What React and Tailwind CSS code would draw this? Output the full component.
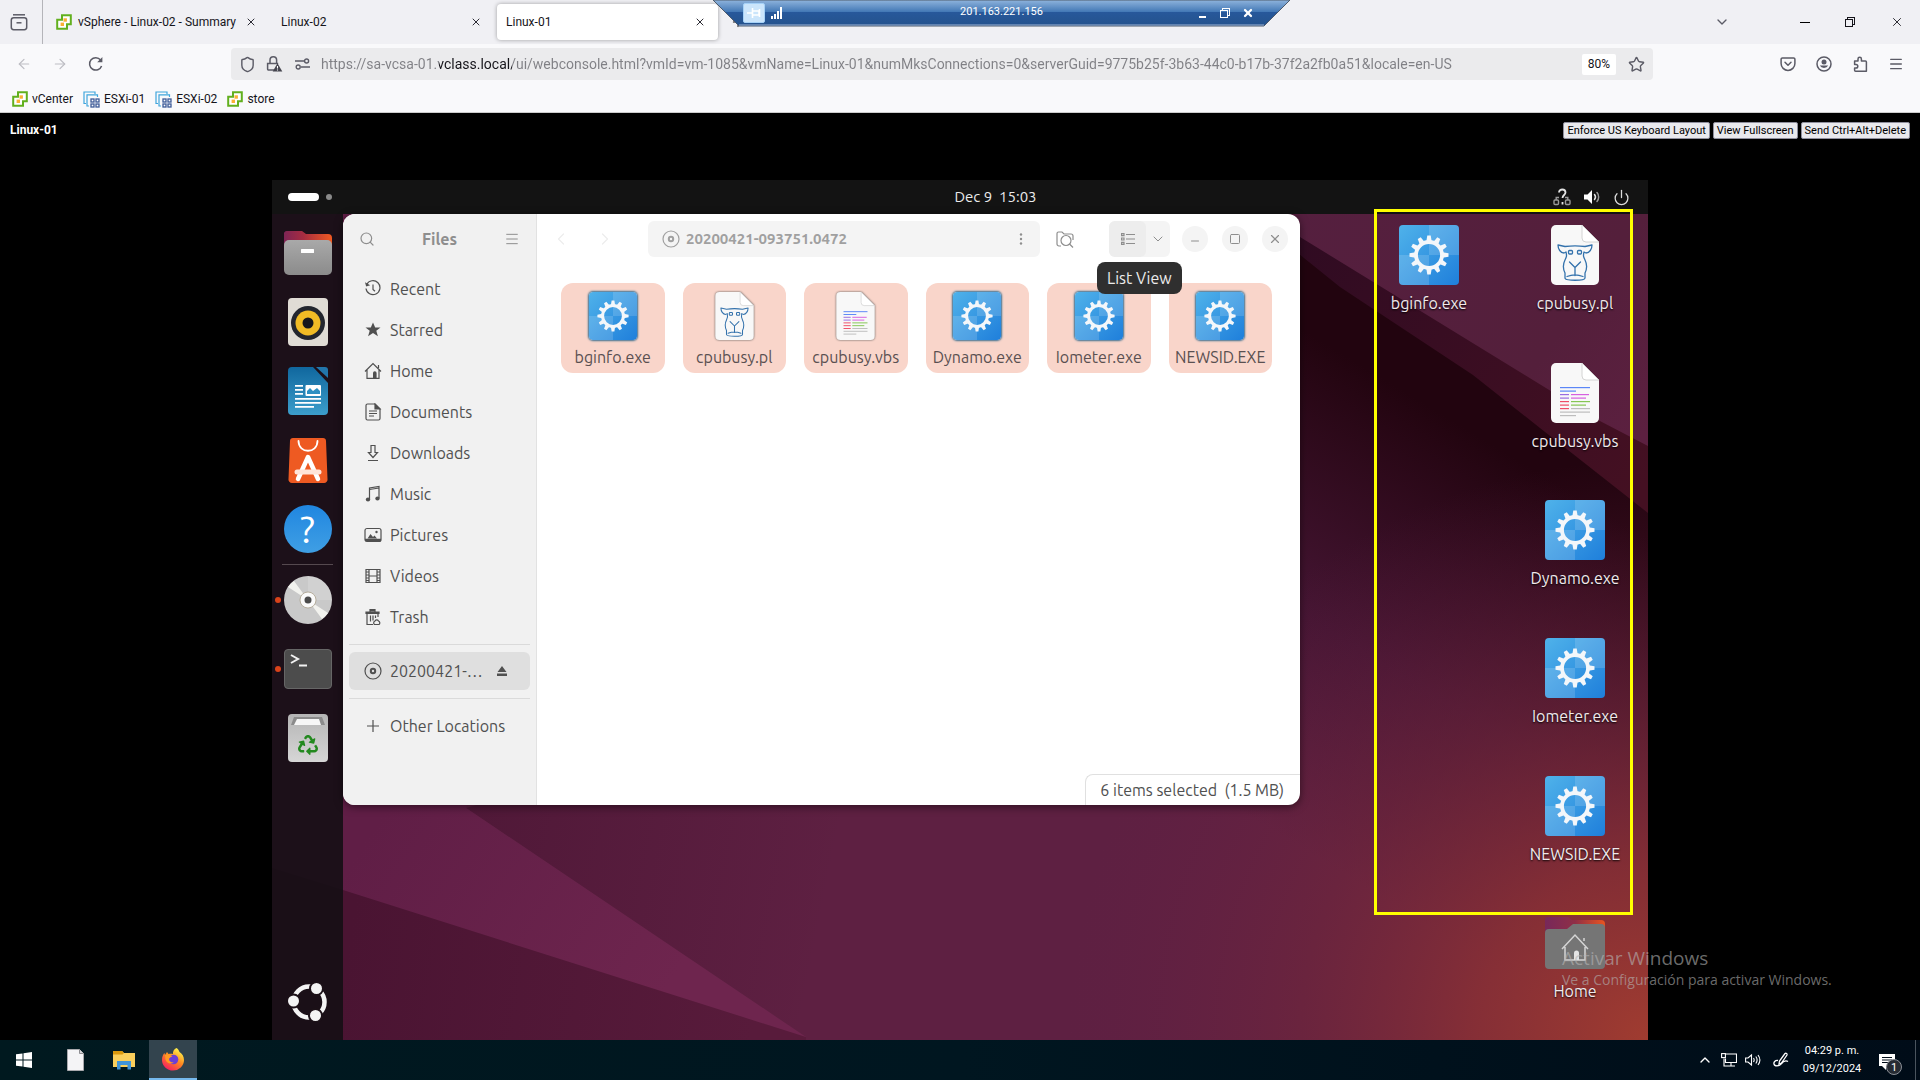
import React from "react";
import {
  ArrowLeft, ArrowRight, Shield, Star, ChevronDown, ChevronUp, ChevronLeft, ChevronRight,
  X, Menu, Search, Minus, Plus, Power, Square,
} from "lucide-react";
import { FaRecycle } from "react-icons/fa";

const URL_TEXT =
  "https://sa-vcsa-01.vclass.local/ui/webconsole.html?vmId=vm-1085&vmName=Linux-01&numMksConnections=0&serverGuid=9775b25f-3b63-44c0-b17b-37f2a2fb0a51&locale=en-US";

/* ---------- Browser icons ---------- */

function VSphereIcon() {
  return (
    <svg viewBox="0 0 16 16" className="size-4 shrink-0">
      <path d="M6 1.2h8.8v9H11V14.8H1.2v-9H6z" fill="#fff" stroke="#62b01e" strokeWidth="2" />
      <path d="M6 1.2v3.6M11 14.8v-3.4" stroke="#62b01e" strokeWidth="2" />
      <rect x="7.5" y="4.3" width="3.4" height="3.4" fill="#fbb034" />
      <rect x="4.6" y="8.6" width="3.4" height="3.4" fill="#fbb034" />
    </svg>
  );
}

function EsxiIcon() {
  return (
    <svg viewBox="0 0 17 17" className="size-[17px] shrink-0" fill="none">
      <path d="M3 12.5H1V1h11v2" stroke="#3fa5dc" strokeWidth="1.2" />
      <path d="M6 15H4V3.8h10.5V6" stroke="#3fa5dc" strokeWidth="1.2" />
      <g stroke="#3d5a97" strokeWidth="1.3">
        <rect x="8" y="8" width="3" height="3" />
        <rect x="13" y="8" width="3" height="3" />
        <rect x="8" y="13" width="3" height="3" />
        <rect x="13" y="13" width="3" height="3" />
      </g>
    </svg>
  );
}

function FirefoxViewIcon() {
  return (
    <svg viewBox="0 0 18 18" className="size-[18px]" fill="none" stroke="#5b5b66" strokeWidth="1.5">
      <path d="M3 1.8h12" />
      <rect x="1.3" y="4.7" width="15.4" height="12" rx="2.4" />
      <path d="M6.5 9.8h5" />
    </svg>
  );
}

function ReloadIcon() {
  return (
    <svg viewBox="0 0 16 16" className="size-4" fill="none" stroke="#5b5b66" strokeWidth="1.5">
      <path d="M13.6 10A6.2 6.2 0 1 1 12.6 4" />
      <path d="M14.4 1v5.2H9.2z" fill="#5b5b66" stroke="none" />
    </svg>
  );
}

function LockWarningIcon() {
  return (
    <svg viewBox="0 0 17 18" className="h-[18px] w-[17px]" fill="none">
      <path d="M4 8V5a3.2 3.2 0 0 1 6.6 0v3M8 15H2.6A1 1 0 0 1 1.6 14V8.6h10.6" stroke="#5b5b66" strokeWidth="1.5" />
      <path d="M11.5 8.2l4.8 8.3H6.7z" fill="#45454e" />
      <path d="M11.5 11v2.6M11.5 14.4v1" stroke="#fff" strokeWidth="1.1" />
    </svg>
  );
}

function PermissionsIcon() {
  return (
    <svg viewBox="0 0 15 12" className="h-3 w-[15px]" fill="none" stroke="#5b5b66" strokeWidth="1.4">
      <path d="M0 3h9M6 9h9" />
      <circle cx="11.6" cy="3" r="2" />
      <circle cx="3.2" cy="9" r="2" />
    </svg>
  );
}

function PocketIcon() {
  return (
    <svg viewBox="0 0 16 16" className="size-4" fill="none" stroke="#5b5b66" strokeWidth="1.5" strokeLinejoin="round" strokeLinecap="round">
      <path d="M2.4 2h11.2a1.3 1.3 0 0 1 1.3 1.3v4.2a6.9 6.9 0 0 1-13.8 0V3.3A1.3 1.3 0 0 1 2.4 2z" />
      <path d="M5 6.3l3 3 3-3" />
    </svg>
  );
}

function AccountIcon() {
  return (
    <svg viewBox="0 0 16 16" className="size-4">
      <circle cx="8" cy="8" r="7" fill="none" stroke="#5b5b66" strokeWidth="1.5" />
      <circle cx="8" cy="6" r="2.5" fill="#5b5b66" />
      <path d="M3.8 9.6h8.4a4.6 4 0 0 1-8.4 0z" fill="#5b5b66" />
    </svg>
  );
}

function ExtensionIcon() {
  return (
    <svg viewBox="0 0 16 17" className="h-[17px] w-4" fill="none" stroke="#5b5b66" strokeWidth="1.5" strokeLinejoin="round">
      <path d="M6 5V3a1.7 1.7 0 0 1 3.4 0v2h4a1 1 0 0 1 1 1v9.2H3.6a1 1 0 0 1-1-1V12H4a1.8 1.8 0 0 0 0-3.6H2.6V5z" />
    </svg>
  );
}

function RestoreIcon({ className }) {
  return (
    <svg viewBox="0 0 10 10" className={className} fill="none" stroke="currentColor" shapeRendering="crispEdges">
      <path d="M.5 2.5h7v7h-7z" />
      <path d="M2.5 2.5v-2h7v7h-2" />
    </svg>
  );
}

/* ---------- Remote desktop connection bar ---------- */

function ConnectionBar() {
  return (
    <div className="absolute left-1/2 top-0 ml-[-247px] h-[27px] w-[577px]">
      <svg viewBox="0 0 577 27" preserveAspectRatio="none" className="absolute inset-0 size-full">
        <defs>
          <linearGradient id="rdp" x1="0" y1="0" x2="0" y2="1">
            <stop offset="0" stopColor="#8fb4dd" />
            <stop offset="0.45" stopColor="#4479b6" />
            <stop offset="0.46" stopColor="#27589b" />
            <stop offset="1" stopColor="#24528c" />
          </linearGradient>
        </defs>
        <path d="M0 0H577L551 26H26z" fill="url(#rdp)" stroke="#4d5a6b" />
        <path d="M26 25H551" stroke="#9fb4d4" />
      </svg>
      <div className="relative flex h-[25px] items-center pr-9 pl-[30px] text-white">
        <button aria-label="Pin" className="flex h-5 w-[22px] items-center justify-center rounded-xs border border-[#a5d1f7] bg-[#cbe5fb]">
          <svg viewBox="0 0 14 10" className="h-2.5 w-3.5" fill="none" stroke="#fff" strokeWidth="1.6">
            <path d="M0 5h5M5.5 0v10M6 3h6v4H6M12.5 1v8" />
          </svg>
        </button>
        <svg viewBox="0 0 12 12" className="ml-1.5 size-3" fill="#fff">
          <path d="M0 9h2v3H0zM3 7h2v5H3zM6 4h2v8H6zM9 0h2v12H9z" />
        </svg>
        <span className="flex-1 pl-6 text-center text-[11px]">201.163.221.156</span>
        <div className="flex items-center gap-3">
          <button aria-label="Minimize" className="flex size-3 items-end justify-center pb-px">
            <span className="h-0.5 w-[7px] bg-white" />
          </button>
          <button aria-label="Restore"><RestoreIcon className="size-2.5" /></button>
          <button aria-label="Close"><X className="size-3" strokeWidth={4.5} /></button>
        </div>
      </div>
    </div>
  );
}

/* ---------- Browser chrome ---------- */

function Tab({ title, icon, active }) {
  return (
    <div
      className={
        active
          ? "flex h-9 w-[221px] items-center rounded bg-white pr-3 pl-[9px] shadow-[0_0_4px_rgba(0,0,0,0.35)]"
          : "flex h-9 w-[222px] items-center rounded pr-3 pl-[9px]"
      }
    >
      {icon && <span className="mr-1.5">{icon}</span>}
      <button className="flex-1 text-left text-[12px] whitespace-nowrap text-[#15141a]">{title}</button>
      <button aria-label={"Close " + title}><X className="size-3" strokeWidth={2} color="#2b2a33" /></button>
    </div>
  );
}

function BrowserChrome() {
  return (
    <header className="border-b border-[#cccccc] bg-[#f9f9fb] text-[#15141a]">
      <div className="relative flex h-11 items-center bg-[#f0f0f4]">
        <button aria-label="Firefox View" className="flex h-full w-[43px] items-center justify-center border-r border-[#b4b4b9] pr-1">
          <FirefoxViewIcon />
        </button>
        <div className="ml-1 flex gap-[3px]">
          <Tab title="vSphere - Linux-02 - Summary" icon={<VSphereIcon />} />
          <Tab title="Linux-02" />
          <Tab title="Linux-01" active />
        </div>
        <button aria-label="New tab" className="ml-3"><Plus className="size-4" strokeWidth={1.5} /></button>
        <ConnectionBar />
        <div className="ml-auto flex items-center pr-4">
          <button aria-label="List all tabs" className="mr-[70px]"><ChevronDown className="size-4" color="#5b5b66" /></button>
          <button aria-label="Minimize window" className="mr-[35px] h-px w-2.5 bg-black" />
          <button aria-label="Restore window" className="mr-[35px]"><RestoreIcon className="size-2.5" /></button>
          <button aria-label="Close window"><X className="size-3.5" strokeWidth={1.5} /></button>
        </div>
      </div>

      <div className="flex h-10 items-center">
        <div className="flex w-[231px] items-center gap-5 pl-4">
          <button aria-label="Back"><ArrowLeft className="size-4" color="#bdbdc3" strokeWidth={1.8} /></button>
          <button aria-label="Forward"><ArrowRight className="size-4" color="#bdbdc3" strokeWidth={1.8} /></button>
          <button aria-label="Reload"><ReloadIcon /></button>
        </div>
        <div className="flex h-8 flex-1 items-center rounded bg-[#ebebed] pl-2">
          <Shield className="size-[17px]" color="#5b5b66" strokeWidth={2} />
          <span className="ml-2.5"><LockWarningIcon /></span>
          <span className="mr-[11px] ml-3"><PermissionsIcon /></span>
          <input
            aria-label="Address"
            readOnly
            value={URL_TEXT}
            className="min-w-0 flex-1 bg-[linear-gradient(90deg,#808085_118px,#15141a_118px,#15141a_191px,#808085_191px)] bg-clip-text text-[14px] text-transparent outline-none"
          />
          <button className="flex h-[21px] items-center rounded-xs bg-white px-1.5 text-[12px]">80%</button>
          <button aria-label="Bookmark" className="mr-2 ml-3"><Star className="size-[17px]" color="#5b5b66" strokeWidth={2} /></button>
        </div>
        <div className="ml-[127px] flex items-center gap-5 pr-4">
          <button aria-label="Pocket"><PocketIcon /></button>
          <button aria-label="Account"><AccountIcon /></button>
          <button aria-label="Extensions"><ExtensionIcon /></button>
          <button aria-label="Menu"><Menu className="size-4" color="#5b5b66" /></button>
        </div>
      </div>

      <nav className="flex h-7 items-center gap-2.5 pt-0.5 pl-3 text-[12px]">
        <a href="#vcenter" className="flex items-center gap-1"><VSphereIcon />vCenter</a>
        <a href="#esxi-01" className="flex items-center gap-1"><EsxiIcon />ESXi-01</a>
        <a href="#esxi-02" className="flex items-center gap-1"><EsxiIcon />ESXi-02</a>
        <a href="#store" className="flex items-center gap-1"><VSphereIcon />store</a>
      </nav>
    </header>
  );
}

/* ---------- File icons ---------- */

const TEETH = [0, 30, 60, 90, 120, 150, 180, 210, 240, 270, 300, 330];

function ExeIcon({ className }) {
  return (
    <svg viewBox="0 0 60 60" className={className}>
      <defs>
        <linearGradient id="exe" x1="0" y1="0" x2="1" y2="1">
          <stop offset="0" stopColor="#4fb2ea" />
          <stop offset="1" stopColor="#1f7fdb" />
        </linearGradient>
      </defs>
      <rect width="60" height="60" rx="4" fill="url(#exe)" />
      <path d="M30 0h26a4 4 0 0 1 4 4v26H30zM0 30h30v30H4a4 4 0 0 1-4-4z" fill="#fff" opacity="0.15" />
      <g fill="#f4f7fa">
        {TEETH.map((a) => (
          <path key={a} d="M28.3 10.5h3.4l1 6h-5.4z" transform={"rotate(" + a + " 30 30)"} />
        ))}
      </g>
      <circle cx="30" cy="30" r="13" fill="none" stroke="#f4f7fa" strokeWidth="3.8" />
    </svg>
  );
}

function PageShape() {
  return (
    <>
      <path d="M5 0h26l17 17v38a5 5 0 0 1-5 5H5a5 5 0 0 1-5-5V5a5 5 0 0 1 5-5z" fill="#f8f8f8" />
      <path d="M31 0l17 17H35a4 4 0 0 1-4-4z" fill="#fff" stroke="#c9c9c9" strokeWidth="0.8" />
    </>
  );
}

function PerlIcon({ className }) {
  return (
    <svg viewBox="0 0 48 60" className={className}>
      <PageShape />
      <g fill="none" stroke="#3472ac" strokeWidth="1.3" strokeLinejoin="round" strokeLinecap="round">
        <path d="M7 20l7 1.5c7-1 13-1 20 0l7-1.500c0 4-2.500 8-6 8l-2-1c-1 4-.5 5 1 8 2 4 2 9 0 13v5c0 3-20 3-20 0v-5c-2-4-2-9 0-13 1.500-3 2-4 1-8l-2 1c-3.500 0-6-4-6-8z" />
        <rect x="17.5" y="25.500" width="4" height="3.5" rx="1" />
        <rect x="26.5" y="25.500" width="4" height="3.5" rx="1" />
        <path d="M18.5 37l5.500 5.500 5.500-5.500M24 42.500v8M16 51.500c5-2 11-2 16 0" />
      </g>
    </svg>
  );
}

const CODE_LINES = [
  ["#5b86f7", 9, 30, 24], ["#5b86f7", 9, 16, 27.5], ["#9a6be0", 9, 9, 31], ["#d65fe0", 20, 18, 31],
  ["#9a6be0", 9, 9, 34.5], ["#d65fe0", 20, 15, 34.5], ["#ef4e67", 9, 9, 38], ["#85c653", 20, 19, 38],
  ["#ef4e67", 9, 9, 41.5], ["#85c653", 20, 15, 41.5], ["#ef4e67", 9, 9, 45], ["#bdbdbd", 20, 19, 45],
  ["#bdbdbd", 9, 30, 48.5], ["#bdbdbd", 9, 16, 52],
];

function ScriptIcon({ className }) {
  return (
    <svg viewBox="0 0 48 60" className={className}>
      <PageShape />
      {CODE_LINES.map(([c, x, w, y], i) => (
        <rect key={i} x={x} y={y} width={w} height="1.2" fill={c} />
      ))}
    </svg>
  );
}

function HomeFolderIcon({ className }) {
  return (
    <svg viewBox="0 0 60 52" className={className}>
      <defs>
        <linearGradient id="folderBack" x1="0" y1="0" x2="1" y2="0">
          <stop offset="0" stopColor="#77285a" />
          <stop offset="0.5" stopColor="#8f2f47" />
          <stop offset="1" stopColor="#e95420" />
        </linearGradient>
      </defs>
      <path d="M0 3a3 3 0 0 1 3-3h20l4 3h29a4 4 0 0 1 4 4v12H0z" fill="url(#folderBack)" />
      <path d="M0 16a4 4 0 0 1 4-4h18l6-5h28a4 4 0 0 1 4 4v37a4 4 0 0 1-4 4H4a4 4 0 0 1-4-4z" fill="#757575" />
      <path d="M17 32l13-14 13 14M20 30v13h20V30M39 21v3" fill="none" stroke="#d5d5d5" strokeWidth="1.5" />
      <path d="M29 43V36a2.5 2.5 0 0 1 5 0v7z" fill="#e4e4e4" />
    </svg>
  );
}

/* ---------- Dock icons ---------- */

function FilesDockIcon() {
  return (
    <svg viewBox="0 0 48 48" className="size-12">
      <defs>
        <linearGradient id="fdBack" x1="0" y1="0" x2="1" y2="0">
          <stop offset="0" stopColor="#7d2455" />
          <stop offset="0.4" stopColor="#a62c41" />
          <stop offset="1" stopColor="#f05a22" />
        </linearGradient>
        <linearGradient id="fdFront" x1="0" y1="0" x2="0" y2="1">
          <stop offset="0" stopColor="#a9a9a9" />
          <stop offset="1" stopColor="#8b8b8b" />
        </linearGradient>
      </defs>
      <path d="M0 6a3 3 0 0 1 3-4h15l4 3h22a4 4 0 0 1 4 4v12H0z" fill="url(#fdBack)" />
      <rect y="11" width="48" height="35" rx="5" fill="url(#fdFront)" />
      <rect x="17" y="20" width="13" height="4" rx="0.5" fill="#fff" />
    </svg>
  );
}

function RhythmboxIcon() {
  return (
    <svg viewBox="0 0 40 48" className="h-12 w-10">
      <rect width="40" height="48" rx="4" fill="#e0dcd5" />
      <circle cx="20" cy="25" r="17" fill="#23262e" />
      <circle cx="20" cy="25" r="12.5" fill="#f0bb25" />
      <circle cx="20" cy="25" r="5.5" fill="#15171c" />
    </svg>
  );
}

function WriterIcon() {
  return (
    <svg viewBox="0 0 40 48" className="h-12 w-10">
      <defs>
        <linearGradient id="writer" x1="0" y1="0" x2="0" y2="1">
          <stop offset="0" stopColor="#10679e" />
          <stop offset="1" stopColor="#3c9ecb" />
        </linearGradient>
      </defs>
      <path d="M4 0h21l15 16v28a4 4 0 0 1-4 4H4a4 4 0 0 1-4-4V4a4 4 0 0 1 4-4z" fill="url(#writer)" />
      <path d="M28 0h9a3 3 0 0 1 3 3v8z" fill="#2276ab" />
      <g fill="#fff">
        <path d="M7 18h8v1.8H7zM7 22h8v1.8H7zM7 26h8v1.8H7zM7 31h26v1.8H7zM7 35h26v1.8H7zM7 39h19v1.8H7z" />
        <rect x="17.5" y="18" width="15.5" height="11" rx="1" />
      </g>
      <path d="M19 27v-3l3-3 3 3 4-3 3 3v3z" fill="#2c8fc2" />
    </svg>
  );
}

function SoftwareIcon() {
  return (
    <svg viewBox="0 0 40 46" className="h-[46px] w-10" fill="none" strokeLinecap="round">
      <path d="M5 1h30a3 3 0 0 1 3 2.7L39.5 42a3.5 3.5 0 0 1-3.5 4H4a3.5 3.5 0 0 1-3.5-4L2 3.7A3 3 0 0 1 5 1z" fill="#ee5a22" />
      <path d="M10.5 4c0 13 19 13 19 0" stroke="#fff" strokeWidth="1.8" />
      <path d="M10 42l10-22 10 22" stroke="#fff" strokeWidth="4.5" strokeLinejoin="round" />
      <path d="M9 35h22" stroke="#ffe4d8" strokeWidth="5" />
    </svg>
  );
}

function DiscDockIcon() {
  return (
    <svg viewBox="0 0 48 48" className="size-12">
      <circle cx="24" cy="24" r="24" fill="#c9c9c9" />
      <path d="M24 24L4 11a24 24 0 0 1 6-6zM24 24l20 13a24 24 0 0 1-6 6z" fill="#f2f2ee" />
      <path d="M24 0a24 24 0 0 1 24 24H24z" fill="#fff" opacity="0.15" />
      <circle cx="24" cy="24" r="8" fill="#fafafa" stroke="#a9a08a" strokeWidth="0.8" />
      <circle cx="24" cy="24" r="3.5" fill="#4b4b4b" />
    </svg>
  );
}

function TerminalIcon() {
  return (
    <svg viewBox="0 0 48 40" className="h-10 w-12" fill="none">
      <rect x="0.5" y="0.5" width="47" height="39" rx="3.5" fill="#4c4c4c" stroke="#666" />
      <path d="M7 6l7 4-7 4M15 16.5h8" stroke="#f2f2f2" strokeWidth="2" />
    </svg>
  );
}

function TrashDockIcon() {
  return (
    <div className="flex h-12 w-10 flex-col items-center rounded bg-gradient-to-b from-[#b5b5b5] to-[#d6d6d6] pt-[3px]">
      <svg viewBox="0 0 34 8" className="h-2 w-[34px]">
        <path d="M3 0h28l3 8H0z" fill="#8b8b8b" />
        <path d="M6 2h22l2 6H3z" fill="#f6f6f6" />
      </svg>
      <FaRecycle className="mt-2.5 size-5" color="#23891f" />
    </div>
  );
}

function UbuntuLogo() {
  return (
    <svg viewBox="0 0 40 40" className="size-10" fill="none">
      <circle cx="21" cy="20" r="15.5" stroke="#f4f4f4" strokeWidth="4.5" />
      {[[28.5, 6.5], [5.5, 19], [27.5, 33.5]].map(([x, y]) => (
        <circle key={y} cx={x} cy={y} r="6.5" fill="#f4f4f4" stroke="#1c1118" strokeWidth="2" />
      ))}
    </svg>
  );
}

function DockItem({ label, running, children }) {
  return (
    <button aria-label={label} className="relative flex h-12 w-full items-center justify-center">
      {running && <span className="absolute left-[3px] size-1.5 rounded-full bg-[#d9431a]" />}
      {children}
    </button>
  );
}

function Dock() {
  return (
    <aside className="flex w-[71px] shrink-0 flex-col items-center bg-[#170f15]/93 pt-[15px] pb-[18px]">
      <div className="flex w-full flex-col gap-[21px]">
        <DockItem label="Files"><FilesDockIcon /></DockItem>
        <DockItem label="Rhythmbox"><RhythmboxIcon /></DockItem>
        <DockItem label="Writer"><WriterIcon /></DockItem>
        <DockItem label="Software"><SoftwareIcon /></DockItem>
        <DockItem label="Help">
          <span className="flex size-12 items-center justify-center rounded-full bg-gradient-to-b from-[#1f86e0] to-[#3f9fe4] text-[38px] leading-none text-white">?</span>
        </DockItem>
      </div>
      <div className="my-[11px] h-px w-[51px] bg-[#55494f]" />
      <div className="flex w-full flex-col gap-[21px]">
        <DockItem label="Disc" running><DiscDockIcon /></DockItem>
        <DockItem label="Terminal" running><TerminalIcon /></DockItem>
        <DockItem label="Trash"><TrashDockIcon /></DockItem>
      </div>
      <button aria-label="Show applications" className="mt-auto"><UbuntuLogo /></button>
    </aside>
  );
}

/* ---------- Sidebar glyphs ---------- */

const GLYPHS = {
  recent: (
    <>
      <path d="M2.7 4.5A7 7 0 1 1 2 8.5" />
      <path d="M1 2.2l1.2 4.2 4-1.2z" fill="currentColor" stroke="none" />
      <path d="M9 4.5V9.5l2 1.8" />
    </>
  ),
  starred: <path d="M9 1.5l2.2 5h5.3l-4.2 3.3 1.6 5.4L9 12l-4.9 3.2 1.6-5.4L1.5 6.5h5.3z" fill="currentColor" stroke="none" />,
  home: (
    <>
      <path d="M1 9.5l8-8 8 8M3 8v8.4h12V8M14.5 3v3" />
      <path d="M9 16.5V11a1.8 1.8 0 0 1 3.6 0v5.5z" fill="currentColor" stroke="none" />
    </>
  ),
  documents: (
    <>
      <path d="M3.5 1H11l5 5v9.5a1.5 1.5 0 0 1-1.5 1.5h-11A1.5 1.5 0 0 1 2 15.5v-13A1.5 1.5 0 0 1 3.5 1z" />
      <path d="M11 1v5h5z" fill="currentColor" />
      <path d="M5 8h8M5 10.5h8M5 13h5" />
    </>
  ),
  downloads: <path d="M7 1.5h4v7h2.5L9 13.5 4.5 8.5H7zM4 16.5h10" />,
  music: (
    <>
      <path d="M5.5 14V3l9.5-1.5V13M5.5 4.5L15 3" />
      <ellipse cx="4" cy="14.5" rx="2.2" ry="1.9" fill="currentColor" stroke="none" />
      <ellipse cx="13.5" cy="13.5" rx="2.2" ry="1.9" fill="currentColor" stroke="none" />
    </>
  ),
  pictures: (
    <>
      <rect x="1" y="2.5" width="16" height="13" rx="2" />
      <path d="M1 14h16" strokeWidth="2.5" />
      <path d="M3.5 12.5l3-4.5 2.5 3 1.5-1.5 2.5 3z" fill="currentColor" stroke="none" />
      <circle cx="12.5" cy="6" r="1.2" fill="currentColor" stroke="none" />
    </>
  ),
  videos: (
    <>
      <path d="M2 2.5h14v13H2zM5 2.5v13M13 2.5v13M5 9h8" />
      <path d="M2 5h3M2 8h3M2 11h3M2 13.5h3M13 5h3M13 8h3M13 11h3M13 13.5h3" strokeWidth="1" />
    </>
  ),
  trash: (
    <>
      <path d="M2 4h13v1.5H2zM6 3.5V1.5h5v2" fill="currentColor" />
      <path d="M3 6v10.5h6M6.5 7.5v6M9 7.5v5M11.5 7.5v2.5M14 6v3" />
      <path d="M10.5 16.5a2 2 0 0 1 .5-3.5 2 2 0 0 1 3.5 0 2 2 0 0 1 .5 3.5z" />
    </>
  ),
  disc: (
    <>
      <circle cx="9" cy="9" r="8" />
      <circle cx="9" cy="9" r="2.2" strokeWidth="2" />
    </>
  ),
  other: <path d="M9 3v12M3 9h12" />,
};

function Glyph({ name }) {
  return (
    <svg viewBox="0 0 18 18" className="size-[18px] shrink-0" fill="none" stroke="currentColor" strokeWidth="1.2">
      {GLYPHS[name]}
    </svg>
  );
}

const PLACES = [
  ["recent", "Recent"], ["starred", "Starred"], ["home", "Home"], ["documents", "Documents"], ["downloads", "Downloads"],
  ["music", "Music"], ["pictures", "Pictures"], ["videos", "Videos"], ["trash", "Trash"],
];

function Sidebar() {
  return (
    <aside className="flex w-[194px] shrink-0 flex-col border-r border-[#e2e2e2] bg-[#f1f1f1] text-[16px] text-[#505050]">
      <div className="flex h-[50px] items-center justify-between px-4 text-[#8e8e8e]">
        <button aria-label="Search"><Search className="size-4" strokeWidth={1.8} /></button>
        <h2 className="font-bold">Files</h2>
        <button aria-label="Main menu"><Menu className="size-4" strokeWidth={1.5} /></button>
      </div>
      <nav className="flex flex-col px-1.5 pt-1">
        {PLACES.map(([icon, label]) => (
          <a key={label} href={"#" + icon} className="flex h-[41px] items-center gap-2 px-[15px]">
            <Glyph name={icon} />
            {label}
          </a>
        ))}
        <hr className="my-[7px] border-[#dadada]" />
        <div className="flex h-[38px] items-center gap-2 rounded-md bg-[#dfdfdf] px-[15px]">
          <Glyph name="disc" />
          <a href="#disc" className="flex-1">20200421-…</a>
          <button aria-label="Eject">
            <svg viewBox="0 0 10 10" className="mr-2 size-2.5" fill="currentColor"><path d="M5 0l4.5 6h-9zM0 7.5h10V10H0z" /></svg>
          </button>
        </div>
        <hr className="mt-2 mb-[7px] border-[#dadada]" />
        <a href="#other" className="flex h-10 items-center gap-2 px-[15px]">
          <Glyph name="other" />
          Other Locations
        </a>
      </nav>
    </aside>
  );
}

/* ---------- File manager window ---------- */

const FILES = [
  ["bginfo.exe", "exe"], ["cpubusy.pl", "pl"], ["cpubusy.vbs", "vbs"],
  ["Dynamo.exe", "exe"], ["Iometer.exe", "exe"], ["NEWSID.EXE", "exe"],
];

function TileIcon({ kind }) {
  if (kind === "exe") return <ExeIcon className="size-12 rounded shadow-[0_0_2px_1px_#3b6f8f]" />;
  if (kind === "pl") return <PerlIcon className="h-12 w-[39px] drop-shadow-[0_0_1px_#555]" />;
  return <ScriptIcon className="h-12 w-[39px] drop-shadow-[0_0_1px_#555]" />;
}

function WindowButton({ label, children }) {
  return (
    <button aria-label={label} className="flex size-[26px] items-center justify-center rounded-full bg-[#f4f4f4]">
      {children}
    </button>
  );
}

function FilesWindow() {
  return (
    <section className="flex min-h-[591px] w-[957px] max-w-11/15 self-start overflow-hidden rounded-xl bg-white shadow-[0_2px_8px_rgba(0,0,0,0.5)]">
      <Sidebar />
      <div className="flex min-w-0 flex-1 flex-col">
        <div className="flex h-[50px] items-center pr-3 pl-3.5 text-[#8e8e8e]">
          <button aria-label="Back" disabled className="text-[#ededed]"><ChevronLeft className="size-5" strokeWidth={1.5} /></button>
          <button aria-label="Forward" disabled className="ml-6 text-[#ededed]"><ChevronRight className="size-5" strokeWidth={1.5} /></button>
          <div className="ml-[33px] flex h-9 flex-1 items-center gap-1.5 rounded-md bg-[#f4f4f4] pr-[17px] pl-3.5 text-[15px] font-bold text-[#a0a0a0]">
            <Glyph name="disc" />
            <span className="flex-1">20200421-093751.0472</span>
            <button aria-label="Path menu">
              <svg viewBox="0 0 4 12" className="h-3 w-1" fill="#8e8e8e"><circle cx="2" cy="1.5" r="1.2" /><circle cx="2" cy="6" r="1.2" /><circle cx="2" cy="10.5" r="1.2" /></svg>
            </button>
          </div>
          <button aria-label="Search folder" className="ml-4">
            <svg viewBox="0 0 18 18" className="size-[18px]" fill="none" stroke="currentColor" strokeWidth="1.2">
              <path d="M5 16H3a2 2 0 0 1-2-2V3.5A1.5 1.5 0 0 1 2.5 2H6l2 2h7a2 2 0 0 1 2 2v4" />
              <circle cx="10" cy="10.5" r="5" />
              <path d="M13.5 14l3.5 3.5" />
            </svg>
          </button>
          <div className="ml-[35px] flex h-9 rounded-md bg-[#f4f4f4]">
            <div className="relative">
              <button aria-label="List view" className="flex h-9 w-[37px] items-center justify-center rounded-md bg-[#ededed]">
                <svg viewBox="0 0 14 12" className="h-3 w-3.5" fill="none" stroke="currentColor" strokeWidth="1.2">
                  <path d="M5 1.5h9M5 6h9M5 10.5h9" />
                  <path d="M.6.6h2.4v2H.6zM.6 5h2.4v2H.6zM.6 9.4h2.4v2H.6z" />
                </svg>
              </button>
              <div role="tooltip" className="absolute top-[41px] left-[-12px] rounded-lg bg-[#2f2f2f] px-2.5 py-[5px] text-[16px] leading-[22px] whitespace-nowrap text-[#ececec]">
                List View
              </div>
            </div>
            <button aria-label="View options" className="flex w-6 items-center justify-center"><ChevronDown className="size-4" strokeWidth={1.5} /></button>
          </div>
          <div className="ml-3 flex gap-3.5">
            <WindowButton label="Minimize"><Minus className="mt-1 size-3" strokeWidth={2} /></WindowButton>
            <WindowButton label="Maximize"><Square className="size-3" strokeWidth={2} /></WindowButton>
            <WindowButton label="Close"><X className="size-3.5" strokeWidth={2} /></WindowButton>
          </div>
        </div>
        <ul className="grid grid-cols-6 gap-[18px] pt-[19px] pr-7 pl-6">
          {FILES.map(([name, kind]) => (
            <li key={name} className="flex h-[90px] flex-col items-center rounded-xl bg-[#f9d5ca] pt-[9px]">
              <TileIcon kind={kind} />
              <span className="mt-1.5 text-[16px] leading-[22px] text-[#5a5051]">{name}</span>
            </li>
          ))}
        </ul>
        <p className="mt-auto flex h-[31px] items-center self-end rounded-tl-lg border-t border-l border-[#e0e0e0] pr-4 pl-3.5 text-[16px] whitespace-pre text-[#505050]">
          6 items selected  (1.5 MB)
        </p>
      </div>
    </section>
  );
}

/* ---------- Virtual machine desktop ---------- */

function Wallpaper() {
  return (
    <svg viewBox="0 0 1376 860" preserveAspectRatio="none" className="absolute inset-0 size-full">
      <defs>
        <linearGradient id="base" gradientUnits="userSpaceOnUse" x1="1180" y1="240" x2="950" y2="620">
          <stop offset="0" stopColor="#22040f" />
          <stop offset="0.55" stopColor="#451533" />
          <stop offset="1" stopColor="#5e2042" />
        </linearGradient>
        <radialGradient id="red" gradientUnits="userSpaceOnUse" cx="1376" cy="860" r="580">
          <stop offset="0" stopColor="#a03c30" />
          <stop offset="0.3" stopColor="#8c3134" stopOpacity="0.85" />
          <stop offset="0.6" stopColor="#76283a" stopOpacity="0.5" />
          <stop offset="1" stopColor="#662145" stopOpacity="0" />
        </radialGradient>
        <linearGradient id="band" gradientUnits="userSpaceOnUse" x1="1028" y1="60" x2="1376" y2="300">
          <stop offset="0" stopColor="#300b22" />
          <stop offset="1" stopColor="#441022" />
        </linearGradient>
        <linearGradient id="top" gradientUnits="userSpaceOnUse" x1="1028" y1="0" x2="1376" y2="250">
          <stop offset="0" stopColor="#551f3f" />
          <stop offset="0.7" stopColor="#541f3b" />
          <stop offset="1" stopColor="#5c2040" />
        </linearGradient>
        <linearGradient id="shade" gradientUnits="userSpaceOnUse" x1="194" y1="628" x2="560" y2="700">
          <stop offset="0" stopColor="#3a0c28" stopOpacity="0.4" />
          <stop offset="1" stopColor="#3a0c28" stopOpacity="0" />
        </linearGradient>
        <linearGradient id="wedge" gradientUnits="userSpaceOnUse" x1="120" y1="620" x2="400" y2="800">
          <stop offset="0" stopColor="#601e46" />
          <stop offset="1" stopColor="#6e254e" />
        </linearGradient>
        <linearGradient id="corner" gradientUnits="userSpaceOnUse" x1="71" y1="800" x2="480" y2="860">
          <stop offset="0" stopColor="#4a1432" />
          <stop offset="1" stopColor="#581b3b" />
        </linearGradient>
      </defs>
      <rect width="1376" height="860" fill="url(#base)" />
      <rect width="1376" height="860" fill="url(#red)" />
      <path d="M194 628L534 857H1000V400z" fill="url(#shade)" />
      <path d="M0 0H400L194 628 534 857 0 860z" fill="url(#wedge)" />
      <path d="M0 688L71 710 534 857V860H0z" fill="url(#corner)" />
      <path d="M960 20L1068 107 1201 195 1268 248 1376 333V200L1028 20z" fill="url(#band)" />
      <path d="M988 34L1028 57 1326 240 1376 266V0H960z" fill="url(#top)" />
    </svg>
  );
}

function TopBar() {
  return (
    <div className="relative flex h-[34px] items-center bg-[#131313] text-[#ececec]">
      <button aria-label="Activities" className="flex w-[71px] shrink-0 items-center gap-[7px] pl-4">
        <span className="h-2 w-[31px] rounded-full bg-white" />
        <span className="size-1.5 rounded-full bg-[#8a8a8a]" />
      </button>
      <div className="grid flex-1 grid-cols-[1fr_auto_1fr] items-center">
        <span className="col-start-2 text-[15px] leading-[22px] whitespace-pre">Dec 9  15:03</span>
        <div className="flex items-center justify-end gap-3 pr-[18px]">
          <svg viewBox="0 0 18 18" className="size-[18px]" fill="none" stroke="#9a9a9a" strokeWidth="1.4">
            <rect x="1" y="12" width="4.5" height="4.5" rx="1" />
            <rect x="12.5" y="12" width="4.5" height="4.5" rx="1" />
            <path d="M3.2 12V9.5H6M14.8 12V9.5H12" />
            <path d="M6 4.5C6 .5 12.5.5 12.5 4.5c0 2.5-3 2.5-3 5.5M9.5 14v2.5" stroke="#e4e4e4" strokeWidth="1.8" />
          </svg>
          <svg viewBox="0 0 18 18" className="size-[18px]" fill="none" stroke="#e4e4e4" strokeWidth="1.5" strokeLinecap="round">
            <path d="M1 6.5h3.5L9 2v14l-4.5-4.5H1z" fill="#fff" stroke="none" />
            <path d="M11.5 6.5c1.2 1.5 1.2 3.5 0 5" />
            <path d="M14 4.5c2.2 2.5 2.2 6.5 0 9" stroke="#9a9a9a" />
          </svg>
          <Power className="size-[17px]" strokeWidth={1.8} color="#dcdcdc" />
        </div>
      </div>
    </div>
  );
}

function DesktopItem({ name, className, children }) {
  return (
    <div className={"flex flex-col items-center pt-[11px] " + className}>
      {children}
      <span className="mt-[7px] text-[16px] leading-[22px] text-[#f1e9ec] [text-shadow:0_1px_2px_#000]">{name}</span>
    </div>
  );
}

function VirtualMachine() {
  return (
    <div className="relative mx-auto flex w-43/60 flex-1 flex-col font-['Ubuntu','Noto_Sans',sans-serif]">
      <Wallpaper />
      <TopBar />
      <div className="relative flex flex-1">
        <Dock />
        <div className="flex min-w-0 flex-1 justify-between">
          <FilesWindow />
          <div className="grid w-[292px] shrink-0 grid-cols-2 grid-rows-6">
            <DesktopItem name="bginfo.exe" className="col-start-1 row-start-1"><ExeIcon className="size-[60px]" /></DesktopItem>
            <DesktopItem name="cpubusy.pl" className="col-start-2 row-start-1"><PerlIcon className="h-[60px] w-12" /></DesktopItem>
            <DesktopItem name="cpubusy.vbs" className="col-start-2 row-start-2"><ScriptIcon className="h-[60px] w-12" /></DesktopItem>
            <DesktopItem name="Dynamo.exe" className="col-start-2 row-start-3"><ExeIcon className="size-[60px]" /></DesktopItem>
            <DesktopItem name="Iometer.exe" className="col-start-2 row-start-4"><ExeIcon className="size-[60px]" /></DesktopItem>
            <DesktopItem name="NEWSID.EXE" className="col-start-2 row-start-5"><ExeIcon className="size-[60px]" /></DesktopItem>
            <DesktopItem name="Home" className="col-start-2 row-start-6">
              <span className="flex h-[60px] items-center"><HomeFolderIcon className="h-[54px] w-[60px]" /></span>
            </DesktopItem>
          </div>
        </div>
      </div>
      <div className="absolute top-[29px] right-[15px] bottom-[125px] w-[259px] border-[3px] border-[#ffff00]" />
    </div>
  );
}

/* ---------- Windows taskbar ---------- */

function FirefoxIcon() {
  return (
    <svg viewBox="0 0 24 24" className="size-6">
      <defs>
        <linearGradient id="fx" x1="0.8" y1="0.1" x2="0.25" y2="0.95">
          <stop offset="0" stopColor="#fff04a" />
          <stop offset="0.45" stopColor="#ff8a1f" />
          <stop offset="1" stopColor="#f5225f" />
        </linearGradient>
      </defs>
      <path d="M15.5 1c1.5 1 2.5 2.5 3 4 2.7 1.7 4.5 4.5 4.5 8A11 10.5 0 0 1 1 13c0-3 1-5.5 2.5-7L4 8l2-3 1.5 2c1.5-.3 3-.3 4.5 0C11.5 4.5 13 2 15.5 1z" fill="url(#fx)" />
      <circle cx="12.5" cy="12.5" r="4.8" fill="#6b3fd6" />
      <path d="M4 8c2-1 4-.5 7.5 1-1 1.5-3 1-3.5 3 0 2.5 2.5 4 5 3.5-3 2-7.5 1-8.5-3z" fill="#ff9a22" />
    </svg>
  );
}

function Taskbar() {
  return (
    <footer className="flex h-10 items-stretch bg-gradient-to-r from-[#00191f] via-[#001620] to-[#000c18] text-white">
      <button aria-label="Start" className="flex w-12 items-center justify-center">
        <svg viewBox="0 0 16 16" className="size-4" fill="#fff">
          <path d="M0 2.3L6.5 1.4V7.5H0zM7.5 1.2L16 0v7.5H7.5zM0 8.5h6.5v6.1L0 13.7zM7.5 8.5H16V16l-8.5-1.2z" />
        </svg>
      </button>
      <button aria-label="Document" className="ml-[3px] flex w-12 items-center justify-center">
        <svg viewBox="0 0 17 22" className="h-[22px] w-[17px]">
          <path d="M.5.5h12l4 4v17H.5z" fill="#f4f4f6" stroke="#a9a9ad" />
          <path d="M12.5.5v4h4" fill="#d4d4d8" stroke="#8d8d91" />
        </svg>
      </button>
      <button aria-label="File Explorer" className="flex w-[50px] items-center justify-center">
        <svg viewBox="0 0 22 20" className="h-5 w-[22px]">
          <path d="M0 1h9l2 2h11v14H0z" fill="#f9cf5c" />
          <path d="M0 1h9l2 2-1.5 1.5H0z" fill="#d9980d" />
          <path d="M4 19.5V11h14v8.5h-3.5V15h-7v4.5z" fill="#3f94d8" />
        </svg>
      </button>
      <button aria-label="Firefox" className="flex w-12 items-center justify-center border-b-2 border-[#76b9ed] bg-[#33444e]"><FirefoxIcon /></button>
      <div className="ml-auto flex items-center">
        <button aria-label="Hidden icons"><ChevronUp className="size-4" /></button>
        <button aria-label="Network" className="ml-2">
          <svg viewBox="0 0 16 14" className="h-3.5 w-4" fill="none" stroke="#fff" strokeWidth="1.1">
            <path d="M4.5 1h11v8.5h-11V5.5M10 9.5v3.5M6 13h8M3 5.5v7.5h3" />
            <rect x="0.6" y="0.6" width="3.8" height="4" />
          </svg>
        </button>
        <button aria-label="Volume" className="ml-2">
          <svg viewBox="0 0 16 14" className="h-3.5 w-4" fill="none" stroke="#fff" strokeWidth="1.1">
            <path d="M.6 5h2.4L6.5 2v10L3 9H.6zM8.5 5c.8 1.2.8 2.8 0 4M10.8 3.5c1.5 2 1.5 5 0 7M13 2c2.3 3 2.3 7 0 10" />
          </svg>
        </button>
        <button aria-label="Windows Ink" className="ml-3">
          <svg viewBox="0 0 16 16" className="size-4" fill="none" stroke="#fff" strokeWidth="1.3">
            <path d="M6 12L6.5 9 12 1.5c1-.8 2.5.5 2 1.5L8.5 11z" />
            <path d="M5 8.5c-3-.5-4.5 2-4 3.5.5 2.5 5 2.5 7 0s4-4.5 7-2.5" />
          </svg>
        </button>
        <div className="ml-3 w-[62px] text-center text-[11px] leading-[18px]">
          <div>04:29 p. m.</div>
          <div>09/12/2024</div>
        </div>
        <button aria-label="Notifications" className="relative ml-4 h-full w-6">
          <svg viewBox="0 0 16 16" className="mt-1 size-4">
            <path d="M0 0h16v12H7v4l-4-4H0z" fill="#fff" />
            <path d="M3 3.5h10M3 6h10M3 8.5h10" stroke="#000c18" strokeWidth="1.2" />
          </svg>
          <span className="absolute top-[19px] left-[7px] flex size-4 items-center justify-center rounded-full border border-[#8b8f96] bg-[#262b33] text-[11px] leading-none">1</span>
        </button>
        <div className="ml-3 h-full w-px bg-[#4a545e]" />
        <div className="w-1" />
      </div>
    </footer>
  );
}

/* ---------- Page ---------- */

const CONSOLE_ACTIONS = ["Enforce US Keyboard Layout", "View Fullscreen", "Send Ctrl+Alt+Delete"];

export default function App() {
  return (
    <div className="flex min-h-screen flex-col bg-black font-['Roboto',sans-serif]">
      <BrowserChrome />
      <main className="relative flex flex-1 flex-col">
        <div className="flex h-[67px] items-start justify-between pt-[9px] pr-2.5 pl-2.5">
          <h1 className="text-[12px] leading-[16px] font-bold text-white">Linux-01</h1>
          <div className="flex gap-[3px]">
            {CONSOLE_ACTIONS.map((label) => (
              <button key={label} className="h-[17px] rounded-xs border border-[#8f8f9d] bg-[#e9e9ed] px-[3px] text-[11px] leading-[15px] text-black">{label}</button>
            ))}
          </div>
        </div>
        <VirtualMachine />
        <div className="pointer-events-none absolute right-[83px] bottom-[50px] w-[275px] font-['Open_Sans',sans-serif] whitespace-nowrap text-[#b4b4b4]/60">
          <p className="text-[19px] leading-6">Activar Windows</p>
          <p className="text-[14px] leading-5">Ve a Configuración para activar Windows.</p>
        </div>
      </main>
      <Taskbar />
    </div>
  );
}
